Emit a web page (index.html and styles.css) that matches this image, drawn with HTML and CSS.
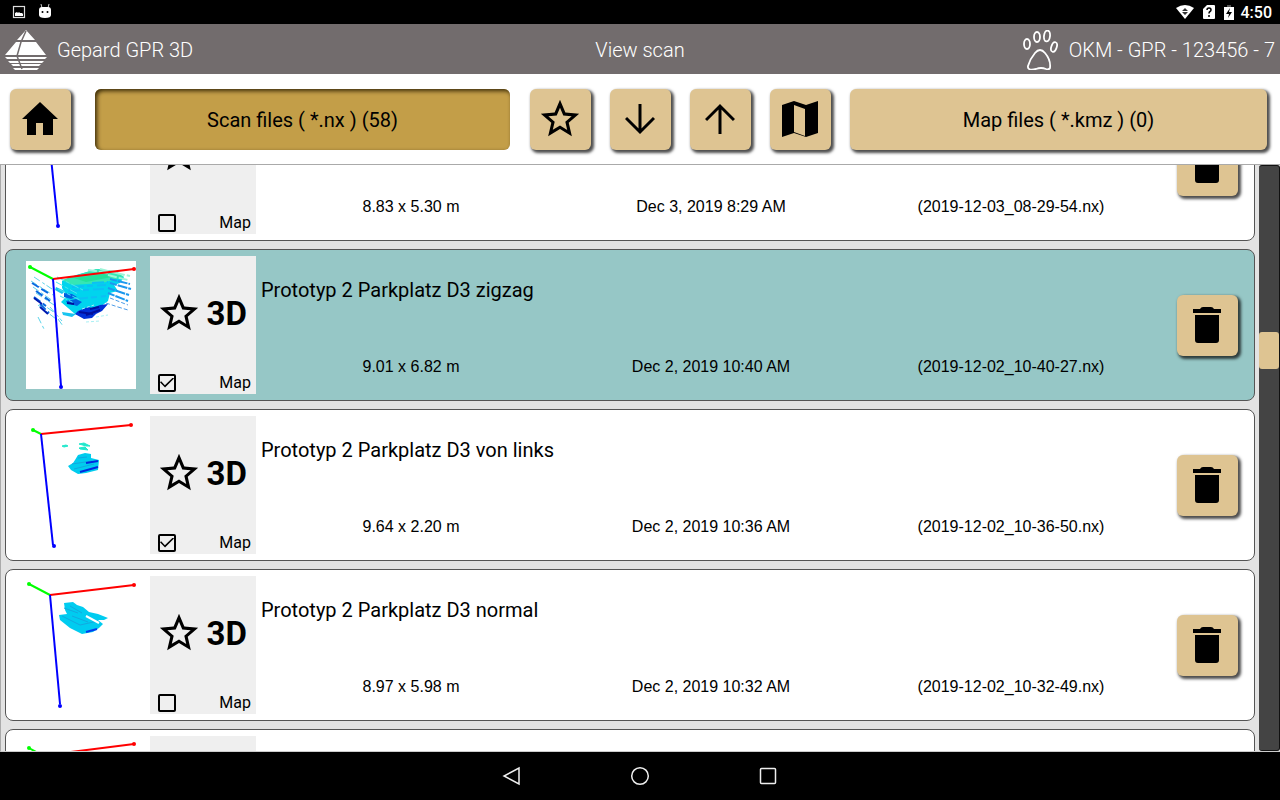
FILE: index.html
```html
<!DOCTYPE html>
<html lang="en">
<head>
    <meta charset="UTF-8">
    <meta name="viewport" content="width=device-width, initial-scale=1.0">
    <title>Gepard GPR 3D - View scan</title>
    <link rel="stylesheet" href="styles.css">
</head>
<body>
    <svg class="sprites" aria-hidden="true">
        <symbol id="star" viewBox="0 0 24 24"><path d="M22 9.24l-7.19-.62L12 2 9.19 8.63 2 9.24l5.46 4.73L5.82 21 12 17.27 18.18 21l-1.63-7.03L22 9.24zM12 15.4l-3.76 2.27 1-4.28-3.32-2.88 4.38-.38L12 6.1l1.71 4.04 4.38.38-3.32 2.88 1 4.28L12 15.4z"/></symbol>
        <symbol id="trash" viewBox="0 0 28 36"><path d="M0 2h7q1-2 3-2h8q2 0 3 2h7v4H0zM2 8h24v25q0 3-3 3H5q-3 0-3-3z"/></symbol>
    </svg>

    <div class="status">
        <svg width="14" height="14" viewBox="0 0 14 14"><rect x="1.500" y="1.500" width="11" height="11" fill="none" stroke="#ddd" stroke-width="1.200"/><path d="M3 10V8l2-1 1 1 1-1 1 1h2l1 1v2H3z" fill="#fff"/></svg>
        <svg width="14" height="16" viewBox="0 0 14 16"><path d="M3 0l1 4M11 0l-1 4" stroke="#ccc"/><path d="M1 6q0-3 3-3h6q3 0 3 3v5q0 3-6 3t-6-3z" fill="#fff"/><circle cx="4.500" cy="8" r="1"/><circle cx="9.500" cy="8" r="1"/></svg>
        <div class="status-right">
            <svg width="18" height="14" viewBox="0 0 18 14"><path d="M0 3Q9-3 18 3L9 14z" fill="#fff"/><path d="M6 6l3-3 3 3zM6 7h6l-3 3z" fill="#333"/></svg>
            <svg width="12" height="14" viewBox="0 0 12 14"><path d="M4 0h7q1 0 1 1v12q0 1-1 1H1q-1 0-1-1V4z" fill="#fff"/><path d="M4 5q0-2 2-2t2 2q0 1-1 1.500T6 8.500M6 10v2" fill="none" stroke="#000" stroke-width="1.500"/></svg>
            <svg width="10" height="15" viewBox="0 0 10 15"><path d="M3 0h4v2h3v13H0V2h3z" fill="#fff"/><path d="M3 0h4v2H3z" fill="#555"/><path d="M6 3L2 9h3l-1 4 4-6H5z"/></svg>
            <span>4:50</span>
        </div>
    </div>

    <header>
        <div class="brand">
            <svg width="42" height="40" viewBox="0 0 42 40" fill="#fff"><path d="M21 0L30 10H12zM11 12h20l10 13H0zM0 27h42l-2 2H2zM3 31h36l-2 2H5zM6 34h30l-2 2H8zM8 38h26l-2 2H10z"/><path d="M21 1l-5 11-4 14 5 13" fill="none" stroke="#726c6d" stroke-width="1.500"/></svg>
            <span>Gepard GPR 3D</span>
        </div>
        <h1>View scan</h1>
        <div class="device">
            <svg width="36" height="40" viewBox="0 0 36 40" fill="none" stroke="#fff" stroke-width="1.800"><ellipse cx="4" cy="14" rx="3" ry="5"/><ellipse cx="14" cy="7" rx="3" ry="5"/><ellipse cx="24" cy="6" rx="3" ry="5.500" transform="rotate(7 24 6)"/><ellipse cx="31" cy="17" rx="2.700" ry="5" transform="rotate(18 31 17)"/><path d="M5 36Q7 29 12 23q5-6 10 0 6 7 5 15-1 2-4 1-5-2-10 0-9 2-8-3z"/></svg>
            <span>OKM - GPR - 123456 - 7</span>
        </div>
    </header>

    <nav class="toolbar">
        <button class="btn" aria-label="Home"><svg width="36" height="33" viewBox="0 0 36 33"><path d="M18 0l18 17h-5v16H21V21h-7v12H5V17H0z"/></svg></button>
        <button class="btn files pressed">Scan files ( *.nx ) (58)</button>
        <button class="btn" aria-label="Favorites"><svg width="46" height="46"><use href="#star"/></svg></button>
        <button class="btn" aria-label="Sort down"><svg width="30" height="32" viewBox="0 0 30 32" fill="none" stroke="#000" stroke-width="3"><path d="M15 1v28M1 15l14 14 14-14"/></svg></button>
        <button class="btn" aria-label="Sort up"><svg width="30" height="32" viewBox="0 0 30 32" fill="none" stroke="#000" stroke-width="3"><path d="M15 31V3M1 17L15 3l14 14"/></svg></button>
        <button class="btn" aria-label="Map"><svg width="36" height="36" viewBox="0 0 36 36"><path fill-rule="evenodd" d="M0 4L12 0l12 4L36 0v32l-12 4-12-4L0 36zM12 4v27l11 4V8z"/></svg></button>
        <button class="btn files">Map files ( *.kmz ) (0)</button>
    </nav>

    <main>
        <div class="list" id="list">
            <div class="row">
                <svg class="thumb" viewBox="0 0 110 128"><path class="axis blue" d="M21 18l11 107"/><circle cx="32" cy="125" r="2" fill="#00f"/></svg>
                <div class="panel">
                    <div class="kind"><svg width="46" height="46"><use href="#star"/></svg><b>3D</b></div>
                    <label><input type="checkbox"> Map</label>
                </div>
                <div class="info">
                    <div class="details"><span>8.83 x 5.30 m</span><span>Dec 3, 2019 8:29 AM</span><span>(2019-12-03_08-29-54.nx)</span></div>
                </div>
                <button class="btn" aria-label="Delete"><svg width="28" height="36"><use href="#trash"/></svg></button>
            </div>

            <div class="row selected">
                <svg class="thumb" viewBox="0 0 110 128">
                    <path d="M36 20L50 14 72 8l16 4 10 4-4 6-6 2 4 6-8 2-2 8-8 6-4 6-9 5-12-4-14-12 6-6-5-8z" fill="#00d4ee"/>
                    <path d="M36 19l34-11 20 2 8 6-22 6-30 2z" fill="#35e6b4"/>
                    <path d="M48 17l30-4 8 3-26 5z" fill="#22e29a"/>
                    <path d="M62 9l20 3M74 8l24 6M82 14l20 5M90 12l14 3" stroke="#9df5d8" stroke-width="2" stroke-dasharray="9 2"/>
                    <path d="M46 26l34-2M42 30l36-2M50 38l30-3M66 22l16-1" stroke="#0cc0f4" stroke-width="2" stroke-dasharray="12 3 6 4"/>
                    <path d="M38 32l8 1 5 3-6 2-7-2zM40 40l10-2 6 3-5 4-10-3z" fill="#0060e0"/>
                    <path d="M52 50l10-4 4 1 8-3 8-1-6 7-6 3-4 4-8 1-9-5z" fill="#0030d8"/>
                    <path d="M53 51l14 2M60 54l14-5M64 48l9-2M41 42l7 1" stroke="#000e9c" stroke-width="2"/>
                    <path d="M36 51l14 2-4 3-9-2zM30 26l9 4-3 3-7-4z" fill="#18c4f0"/>
                    <path d="M31 16l26 13M30 21l22 12M32 28l22 11M34 35l14 7" stroke="#4ae6ec" stroke-dasharray="8 2 4 2"/>
                    <path d="M84 18l20 5M84 22l21 6M82 27l21 7M82 32l20 8" stroke="#1c98ee" stroke-width="2" stroke-dasharray="7 1 10 1"/>
                    <path d="M84 37l18 7M80 42l12 4M92 46l10 3" stroke="#4c9ce8" stroke-dasharray="4 2"/>
                    <path d="M8 16l18 12M5 20l22 14M7 26l20 14M10 32l18 12M9 38l20 14M12 44l18 14M24 46l12 14M32 58l5 7M12 56l6 12" stroke="#5cd4ea" stroke-dasharray="7 3 3 2"/>
                    <path d="M6 22l16 10M8 36l12 9M14 43l9 9M10 30l14 10" stroke="#0868e0" stroke-width="2" stroke-dasharray="8 3"/>
                    <path d="M8 37l8 6M14 46l8 7" stroke="#0018b0" stroke-width="2"/>
                    <path d="M56 48l12-4M60 61l14-1M70 56l12-2" stroke="#a8f0f4" stroke-dasharray="3 2"/>
                    <path class="axis green" d="M4 6l23 12"/><path class="axis red" d="M27 18l81-10"/><path class="axis blue" d="M27 18l8 107"/>
                    <circle cx="4" cy="6" r="2" fill="#0f0"/><circle cx="108" cy="8" r="2" fill="red"/><circle cx="35" cy="126" r="2" fill="#00f"/>
                </svg>
                <div class="panel">
                    <div class="kind"><svg width="46" height="46"><use href="#star"/></svg><b>3D</b></div>
                    <label><input type="checkbox" checked> Map</label>
                </div>
                <div class="info">
                    <h2>Prototyp 2 Parkplatz D3 zigzag</h2>
                    <div class="details"><span>9.01 x 6.82 m</span><span>Dec 2, 2019 10:40 AM</span><span>(2019-12-02_10-40-27.nx)</span></div>
                </div>
                <button class="btn" aria-label="Delete"><svg width="28" height="36"><use href="#trash"/></svg></button>
            </div>

            <div class="row">
                <svg class="thumb" viewBox="0 0 110 128">
                    <path d="M36 25l4-1 2 1-4 1zM53 23l5-1 6 3h-4zM53 27l6-1 3 3-8-1z" fill="#20e8cc" stroke="#20e8cc"/>
                    <path d="M52 34l7-2 6 1v4l8 2-1 10-12 3-8 1-7-4-3-4 5-3 2-3z" fill="#00ccee"/>
                    <path d="M52 37l9-1M46 43l20-3M48 48l20-5" stroke="#11a6e0"/>
                    <path d="M54 51l18-5M60 42l12-2" stroke="#0028e0" stroke-width="2"/>
                    <path class="axis green" d="M7 9l8 4"/><path class="axis red" d="M15 13l90-9"/><path class="axis blue" d="M15 13l12 111"/>
                    <circle cx="7" cy="9" r="2" fill="#0f0"/><circle cx="105" cy="4" r="2" fill="red"/><circle cx="28" cy="125" r="2" fill="#00f"/>
                </svg>
                <div class="panel">
                    <div class="kind"><svg width="46" height="46"><use href="#star"/></svg><b>3D</b></div>
                    <label><input type="checkbox" checked> Map</label>
                </div>
                <div class="info">
                    <h2>Prototyp 2 Parkplatz D3 von links</h2>
                    <div class="details"><span>9.64 x 2.20 m</span><span>Dec 2, 2019 10:36 AM</span><span>(2019-12-02_10-36-50.nx)</span></div>
                </div>
                <button class="btn" aria-label="Delete"><svg width="28" height="36"><use href="#trash"/></svg></button>
            </div>

            <div class="row">
                <svg class="thumb" viewBox="0 0 110 128">
                    <path d="M38 22l9-1 4 3 6 2 6 5 9 2 10 4-4 2-6 0 5 4-4 4-6 4-11 2-12-6-10-8-1-5 8-1-2-4z" fill="#00ccf0"/>
                    <path d="M38 27l14 5M36 35l18 9M44 25l12 7M54 44l18-4M46 35l16 6" stroke="#12a9e0"/>
                    <path d="M60 35l13 7" stroke="#fff" stroke-width="2"/><path d="M60 51l11-3" stroke="#0040f0" stroke-width="2"/>
                    <path class="axis green" d="M3 3l21 11"/><path class="axis red" d="M24 14l84-10"/><path class="axis blue" d="M24 14l10 109"/>
                    <circle cx="3" cy="3" r="2" fill="#0f0"/><circle cx="108" cy="4" r="2" fill="red"/><circle cx="34" cy="125" r="2" fill="#00f"/>
                </svg>
                <div class="panel">
                    <div class="kind"><svg width="46" height="46"><use href="#star"/></svg><b>3D</b></div>
                    <label><input type="checkbox"> Map</label>
                </div>
                <div class="info">
                    <h2>Prototyp 2 Parkplatz D3 normal</h2>
                    <div class="details"><span>8.97 x 5.98 m</span><span>Dec 2, 2019 10:32 AM</span><span>(2019-12-02_10-32-49.nx)</span></div>
                </div>
                <button class="btn" aria-label="Delete"><svg width="28" height="36"><use href="#trash"/></svg></button>
            </div>

            <div class="row">
                <svg class="thumb" viewBox="0 0 110 128">
                    <path class="axis green" d="M3 7l18 10"/><path class="axis red" d="M21 14l87-11"/><path class="axis blue" d="M21 14l10 109"/>
                    <circle cx="3" cy="7" r="2" fill="#0f0"/><circle cx="108" cy="3" r="2" fill="red"/>
                </svg>
                <div class="panel"></div>
            </div>
        </div>
        <div class="scrollbar"><div class="handle"></div></div>
    </main>

    <footer>
        <button aria-label="Back"><svg width="20" height="20" viewBox="0 0 20 20"><path d="M17 2v16L2 10z"/></svg></button>
        <button aria-label="Home screen"><svg width="20" height="20" viewBox="0 0 20 20"><circle cx="10" cy="10" r="8.300"/></svg></button>
        <button aria-label="Recent apps"><svg width="20" height="20" viewBox="0 0 20 20"><rect x="2.500" y="2.500" width="15" height="15" rx="1"/></svg></button>
    </footer>

    <script>
        document.getElementById('list').scrollTop = 80;
    </script>
</body>
</html>
```
FILE: styles.css
```css
* {
    box-sizing: border-box;
}
body {
    margin: 0;
    height: 100vh;
    display: flex;
    flex-direction: column;
    font-family: Roboto, sans-serif;
    color: #000;
    background: #fff;
}
svg {
    display: block;
    flex: none;
}
.sprites {
    display: none;
}
button {
    font-family: inherit;
    border: none;
    padding: 0;
    cursor: pointer;
}
.status {
    height: 24px;
    flex: none;
    display: flex;
    align-items: center;
    gap: 12px;
    padding: 0 8px 0 12px;
    background: #000;
    color: #fff;
    font-size: 16px;
    font-weight: 500;
}
.status-right {
    margin-left: auto;
    display: flex;
    align-items: center;
    gap: 9px;
}
.status-right span {
    margin-left: -2px;
}
header {
    height: 50px;
    flex: none;
    display: grid;
    grid-template-columns: 1fr auto 1fr;
    align-items: center;
    padding: 1px 5px 0;
    background: #726c6d;
    color: #fff;
    font-size: 20px;
    font-weight: 300;
    line-height: 24px;
}
h1 {
    margin: 0;
    font-size: 20px;
    font-weight: 300;
}
.brand, .device {
    display: flex;
    align-items: center;
    gap: 10px;
}
.device {
    justify-content: flex-end;
}
.toolbar {
    display: flex;
    gap: 19px;
    flex: none;
    padding: 15px 13px 14px 10px;
    border-bottom: 1px solid #aaa;
}
.btn {
    width: 61px;
    height: 61px;
    flex: none;
    display: flex;
    align-items: center;
    justify-content: center;
    background: #dec492;
    color: #000;
    border-radius: 6px;
    box-shadow: 2px 2px 3px 1px rgba(0, 0, 0, 0.7);
}
.btn svg {
    margin: 0 2px 2px 0;
}
.row .btn svg {
    margin: 0 1px 0 0;
}
.files {
    flex: 417 1 0;
    font-size: 20px;
}
.pressed {
    flex-grow: 415;
    margin: 0 1px 0 5px;
    background: #c39e48;
    box-shadow: inset 2px 2px 4px #3a2b08;
}
main {
    flex: 1;
    min-height: 0;
    display: flex;
    background: #e3e3e3;
    border-left: 1px solid #aaa;
    border-bottom: 1px solid #ccc;
}
.list {
    flex: 1;
    overflow-y: auto;
    scrollbar-width: none;
    padding: 4px;
}
.row {
    height: 152px;
    margin-bottom: 8px;
    display: flex;
    align-items: center;
    padding: 0 16px 0 20px;
    background: #fff;
    border: 1px solid #555;
    border-radius: 8px;
}
.selected {
    background: #96c7c6;
}
.thumb {
    width: 110px;
    height: 128px;
    margin-right: 14px;
    background: #fff;
}
.axis {
    fill: none;
    stroke-width: 2;
}
.red {
    stroke: red;
}
.green {
    stroke: #0f0;
}
.blue {
    stroke: #00f;
}
.panel {
    width: 106px;
    height: 138px;
    display: flex;
    flex-direction: column;
    justify-content: space-between;
    padding: 34px 5px 0 6px;
    background: #efefef;
}
.kind {
    display: flex;
    align-items: center;
    justify-content: space-between;
    padding-right: 4px;
}
.kind b {
    padding-top: 2px;
    font-size: 33px;
    line-height: 40px;
}
label {
    display: flex;
    align-items: center;
    justify-content: space-between;
    font-size: 16px;
    line-height: 23px;
}
input[type=checkbox] {
    appearance: none;
    width: 18px;
    height: 18px;
    margin: 0 0 0 2px;
    display: flex;
    align-items: center;
    justify-content: center;
    border: 2px solid #000;
    border-radius: 2px;
}
input[type=checkbox]:checked::before {
    content: "";
    width: 14px;
    height: 10px;
    background: #000;
    clip-path: polygon(0 48%, 8% 38%, 35% 78%, 92% 0, 100% 10%, 36% 100%);
}
.info {
    flex: 1;
    align-self: stretch;
    display: flex;
    flex-direction: column;
    padding: 28px 16px 23px 5px;
}
h2 {
    margin: 0;
    font-size: 20px;
    line-height: 24px;
    font-weight: 400;
}
.details {
    margin-top: auto;
    display: grid;
    grid-template-columns: repeat(3, 1fr);
    text-align: center;
    font-family: "Liberation Sans", sans-serif;
    font-size: 16px;
    line-height: 20px;
}
.scrollbar {
    width: 21px;
    padding-top: 166px;
    background: #444;
    border: 1px solid #111;
    border-left: none;
    border-radius: 3px;
}
.handle {
    height: 37px;
    background: #dec492;
    border-radius: 3px;
}
footer {
    height: 48px;
    flex: none;
    display: flex;
    align-items: center;
    justify-content: center;
    gap: 108px;
    background: #000;
}
footer button {
    background: none;
}
footer svg {
    fill: none;
    stroke: #eee;
    stroke-width: 1.5px;
}
```
